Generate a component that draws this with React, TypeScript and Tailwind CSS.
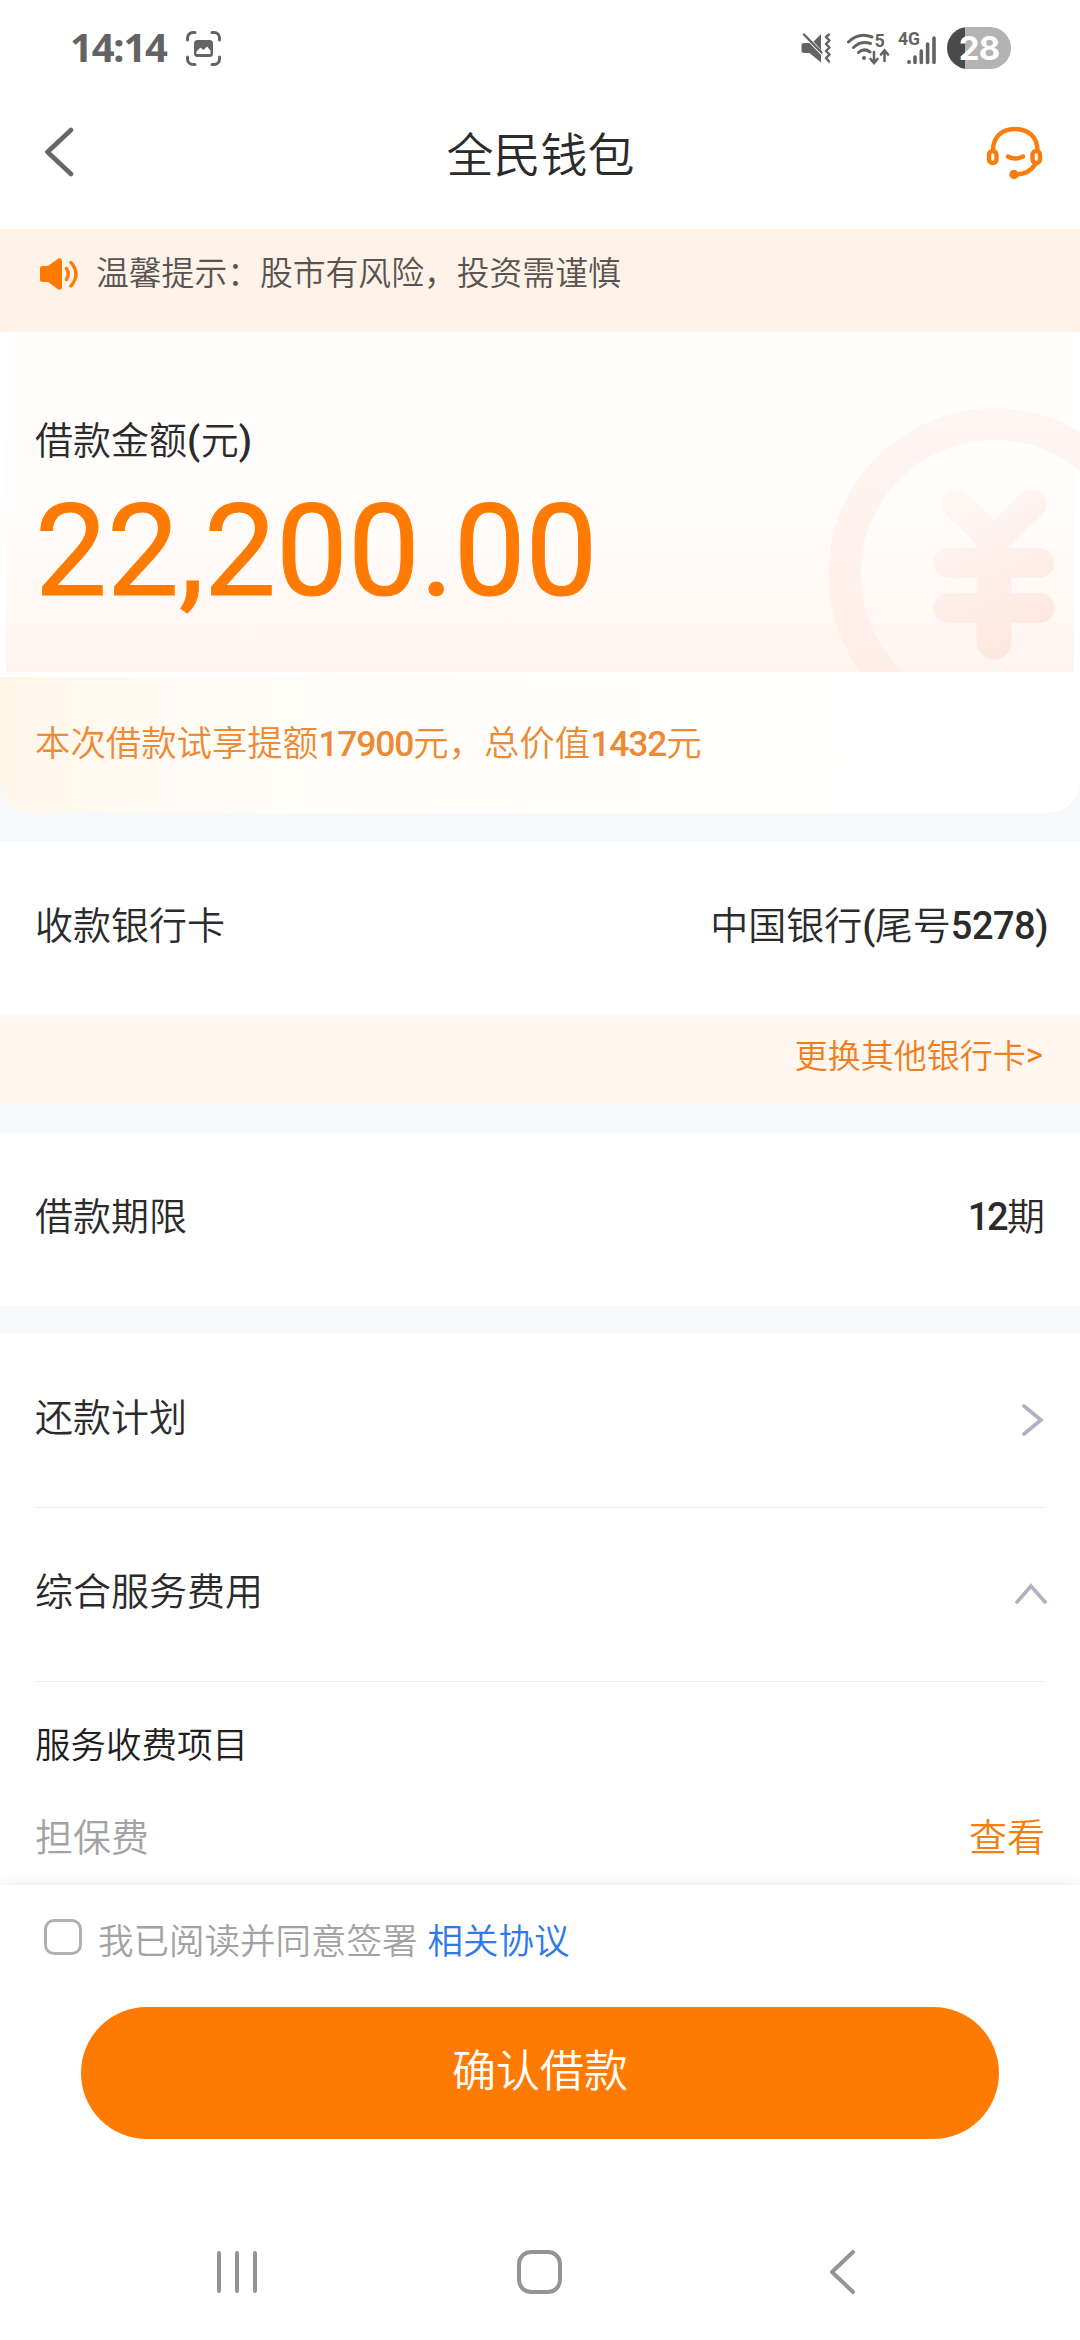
import React from 'react';

interface RowProps {
  label: string;
  children?: React.ReactNode;
  className?: string;
}

interface NumProps {
  children: React.ReactNode;
  className?: string;
}

const Num = ({ children, className = 'tracking-[-0.5px]' }: NumProps) => (
  <span className={`font-[Roboto] font-medium leading-none ${className}`}>{children}</span>
);

const Row = ({ label, children, className = 'h-[173px] pb-3' }: RowProps) => (
  <div className={`flex items-center justify-between bg-white px-[35px] text-[38px] text-[#2b2b2b] ${className}`}>
    <span>{label}</span>
    {children}
  </div>
);

const StatusBar = () => (
  <div className="flex h-24 items-start justify-between pl-[70px] pr-[69px] text-[#636363]">
    <div className="flex items-start pt-[26px]">
      <span className="w-[116px] font-['Noto_Sans'] text-[40px] font-bold leading-[42px] tracking-[-1.2px]">14:14</span>
      <svg className="mt-[5px] size-[35px]" viewBox="0 0 35 35" fill="none">
        <path
          d="M1.500 9V7a5.500 5.500 0 0 1 5.500-5.500H9M26 1.500h2A5.500 5.500 0 0 1 33.500 7v2M33.500 26v2a5.500 5.500 0 0 1-5.500 5.500h-2M9 33.500H7A5.500 5.500 0 0 1 1.500 28v-2"
          stroke="currentColor"
          strokeWidth="3"
          strokeLinecap="round"
        />
        <rect x="8" y="9" width="19" height="17" rx="3.500" fill="currentColor" />
        <path d="M10.500 23v-2.500l4-4 3 2.500 3.500-3.500 3.500 4V23z" fill="#fff" />
      </svg>
    </div>
    <div className="flex items-start">
      {/* muted + vibrate */}
      <svg className="mt-[33px] h-[30px] w-[30px]" viewBox="0 0 30 30" fill="none">
        <path d="M20 1v16L12.500 8.500zM.5 12.500Q.5 10 3 10h5.500L20 22v7.500L8.500 20H3Q.5 20 .5 17.500z" fill="currentColor" />
        <path d="M3 1.500 20.500 19.500" stroke="currentColor" strokeWidth="2.400" strokeLinecap="round" />
        <path
          d="M28 1.500 25 4l3.500 3.500L25 11l3.500 3.500L25 18l3.500 3.500L25 25l3 3.500"
          stroke="currentColor"
          strokeWidth="2.400"
          strokeLinecap="round"
          strokeLinejoin="round"
        />
      </svg>
      {/* wifi with transfer arrows */}
      <svg className="ml-4 mt-[32px] h-[33px] w-[43px]" viewBox="0 0 43 33" fill="none">
        <g stroke="currentColor" strokeWidth="3" strokeLinecap="round">
          <path d="M1.500 10Q12 0 25 5M6.500 15.500Q14 8.500 23.500 11.500M11.500 20.500Q17 15.500 23 20" />
          <path d="M27 20v10M23.500 27l3.500 4 3.500-4M37.500 29V19M34 22.500l3.500-4 3.500 4" strokeWidth="2.600" />
        </g>
        <circle cx="17" cy="26" r="2" fill="currentColor" />
        <text x="27.500" y="15" fontSize="18" fontWeight="700" fontFamily="Roboto, sans-serif" fill="currentColor">
          5
        </text>
      </svg>
      {/* mobile signal */}
      <svg className="ml-2 mt-[30px] h-[35px] w-[40px]" viewBox="0 0 40 35" fill="none">
        <text x="0" y="15" fontSize="17.500" fontWeight="700" fontFamily="Roboto, sans-serif" fill="currentColor">
          4G
        </text>
        <circle cx="11" cy="32" r="2" fill="currentColor" />
        <path d="M17 27v5.500M23.300 21v11.500M29.600 14v18.500M36 8v24.500" stroke="currentColor" strokeWidth="3.600" strokeLinecap="round" />
      </svg>
      <div className="ml-[9px] mt-[27px] flex h-[42px] w-16 items-center justify-center overflow-hidden rounded-full bg-[linear-gradient(90deg,#4a4a4a_18px,#b3b3b3_18px)]">
        <span className="font-[Inter] text-[33px] font-bold leading-none tracking-[-1px] text-white">28</span>
      </div>
    </div>
  </div>
);

const Header = () => (
  <header className="flex h-[133px] items-start justify-between pl-[43px] pr-[37px]">
    <svg className="mt-[31px] h-[50px] w-8" viewBox="0 0 32 50" fill="none">
      <path d="M28 3 4.500 25 28 47" stroke="#666" strokeWidth="4.600" strokeLinecap="round" strokeLinejoin="round" />
    </svg>
    <h1 className="ml-[21px] mt-[26px] text-[47px] leading-[60px] text-[#2b2b2b]">全民钱包</h1>
    <svg className="mt-[28px] h-[58px] w-[58px]" viewBox="0 0 58 58" fill="none" stroke="#f97c0c" strokeWidth="4.400" strokeLinecap="round">
      <path d="M8 26C8 13 17 5 30 5s22.500 8 22.500 21" />
      <rect x="4" y="27" width="7.500" height="12" rx="3.750" />
      <rect x="47.500" y="27" width="7.500" height="12" rx="3.750" />
      <path d="M23 32.500q7 4 15 0" />
      <path d="M50.500 40Q44 50.500 30 50.500" />
      <circle cx="29" cy="50.500" r="4.700" fill="#f97c0c" stroke="none" />
    </svg>
  </header>
);

const Notice = () => (
  <div className="flex h-[103px] items-center bg-[#fff2e8] pb-[18px] pl-[39px]">
    <svg className="mt-1 h-8 w-[40px]" viewBox="0 0 40 32" fill="none">
      <path d="M1 10.500Q1 8 3.500 8H9L19 .8Q23 -.8 23 3v26q0 3.800-4 2.200L9 24H3.500Q1 24 1 21.500z" fill="#ff7a00" />
      <path d="M27.500 10.500Q31 16 27.500 21.500M32 4.500Q42 16 32 28" stroke="#ff7a00" strokeWidth="3.400" strokeLinecap="round" />
    </svg>
    <span className="mb-0.5 ml-[17px] text-[32.8px] text-[#595451]">温馨提示：股市有风险，投资需谨慎</span>
  </div>
);

const YenCoin = () => (
  <svg className="absolute right-0 top-[68px] h-[272px] w-[260px]" viewBox="820 400 260 272" fill="none">
    <defs>
      <linearGradient id="ring" x1="0" y1="408" x2="0" y2="672" gradientUnits="userSpaceOnUse">
        <stop stopColor="#fff5f3" />
        <stop offset="1" stopColor="#feeee8" />
      </linearGradient>
      <linearGradient id="yen" x1="940" y1="490" x2="1030" y2="660" gradientUnits="userSpaceOnUse">
        <stop stopColor="#fff8f6" />
        <stop offset="1" stopColor="#fde6de" />
      </linearGradient>
    </defs>
    <circle cx="994.500" cy="574" r="150" stroke="url(#ring)" strokeWidth="32" />
    <g stroke="url(#yen)" strokeLinecap="round" strokeWidth="30">
      <path d="M957 504 994 541 1032 504M948.500 563H1039M948.500 608H1039.500" strokeLinejoin="round" />
      <path d="M994 547V642" strokeWidth="35" />
    </g>
  </svg>
);

const Amount = () => (
  <section className="bg-[#f6f8fa]">
    <div className="relative h-[345px] overflow-hidden bg-white px-1.5 pb-[5px]">
      <div className="h-[340px] bg-[linear-gradient(180deg,#fffefd_0%,#fffdfc_45%,#fff9f6_75%,#fff4f0_100%)] pl-[29px] pt-[86px]">
        <p className="text-[38px] leading-[40px] text-[#2b2b2b]">
          借款金额<Num className="tracking-[0.5px]">(</Num>元<Num>)</Num>
        </p>
        <p className="relative z-10 mt-[27px] font-[Roboto] text-[128px] font-normal leading-[128px] text-[#ff7a00] [-webkit-text-stroke:1px_#ff7a00]">
          22,200.00
        </p>
      </div>
      <YenCoin />
    </div>
    <div className="flex h-[136px] items-center rounded-b-[32px] bg-[linear-gradient(90deg,#fff6e9_0%,#fffcf7_20%,#fffefc_50%,#fff_100%)] pb-[8px] pl-[35px] text-[35.4px] text-[#ec8a35]">
      <span>
        本次借款试享提额<Num className="tracking-[-1.1px]">17900</Num>元，总价值
        <Num className="tracking-[-1.1px]">1432</Num>元
      </span>
    </div>
  </section>
);

const Footer = () => (
  <footer className="relative flex h-[455px] flex-col bg-white shadow-[0_-2px_16px_rgba(0,0,0,0.08)]">
    <div className="flex h-[122px] items-start pl-11 pt-[34px]">
      <span className="h-9 w-[38px] rounded-[10px] border-[3px] border-[#b0b0b0]" />
      <p className="ml-4 text-[35.5px] leading-[40px] text-[#a3a3a3]">
        我已阅读并同意签署<span className="ml-2.5 text-[#2d7ae8]">相关协议</span>
      </p>
    </div>
    <button className="mx-[81px] flex h-[132px] items-center justify-center rounded-full bg-[#ff7a00] pb-[10px] text-[44px] text-white">
      确认借款
    </button>
    <nav className="mt-[109px] flex h-[48px] items-center justify-between pl-[215px] pr-[222px] text-[#949494]">
      <svg className="h-[48px] w-11" viewBox="0 0 44 48" stroke="currentColor" strokeWidth="4" strokeLinecap="round">
        <path d="M4 5v38M22 5v38M40 5v38" />
      </svg>
      <span className="-ml-[8px] h-[44px] w-[45px] rounded-[14px] border-4 border-current" />
      <svg className="h-[48px] w-[30px]" viewBox="0 0 30 48" fill="none" stroke="currentColor" strokeWidth="4" strokeLinecap="round">
        <path d="M25 4 4 24 25 44" strokeLinejoin="round" />
      </svg>
    </nav>
  </footer>
);

const App = () => {
  return (
    <div className="h-[2340px] w-[1080px] overflow-hidden bg-white font-['Noto_Sans_CJK_SC',sans-serif] font-[350]">
      <StatusBar />
      <Header />
      <Notice />
      <div className="h-[1553px] overflow-hidden bg-[#f6f8fa]">
        <Amount />

        {/* Bank card */}
        <div className="mt-[29px]">
          <Row label="收款银行卡">
            <span className="-mr-[3px]">
              中国银行<Num>(</Num>尾号<Num>5278)</Num>
            </span>
          </Row>
          <div className="flex h-[89px] items-center justify-end bg-[#fff7f0] pb-[10px] pr-[37px] text-[33px] text-[#ee7f1c]">
            更换其他银行卡<span className="font-[Roboto] font-normal">&gt;</span>
          </div>
        </div>

        {/* Loan term */}
        <div className="mt-[29px]">
          <Row label="借款期限">
            <span>
              <Num className="tracking-[-2.5px]">12</Num>
              <span className="ml-px">期</span>
            </span>
          </Row>
        </div>

        {/* Repayment plan and fees */}
        <div className="mt-[27px] h-[560px] bg-white">
          <Row label="还款计划" className="h-[174px] pb-3">
            <svg className="mt-3 h-9 w-6" viewBox="0 0 24 36" fill="none">
              <path d="M3 4 20 18 3 32" stroke="#b0b0c2" strokeWidth="3.600" strokeLinecap="round" />
            </svg>
          </Row>
          <div className="mx-[35px] h-px bg-[#ececec]" />
          <Row label="综合服务费用" className="h-[173px] pb-3">
            <svg className="-mr-1 mt-2.5 h-6 w-9" viewBox="0 0 36 24" fill="none">
              <path d="M4 20 18 4 32 20" stroke="#b0b0c2" strokeWidth="3.600" strokeLinecap="round" />
            </svg>
          </Row>
          <div className="mx-[35px] h-px bg-[#ececec]" />
          <h2 className="px-[35px] pt-[41px] text-[35.5px] leading-[40px] text-[#1f1f1f]">服务收费项目</h2>
          <div className="mt-[50px] flex justify-between px-[35px] text-[38px] leading-[44px] text-[#a3a3a3]">
            <span>担保费</span>
            <span className="text-[#f17f14]">查看</span>
          </div>
        </div>
      </div>
      <Footer />
    </div>
  );
};

export default App;
